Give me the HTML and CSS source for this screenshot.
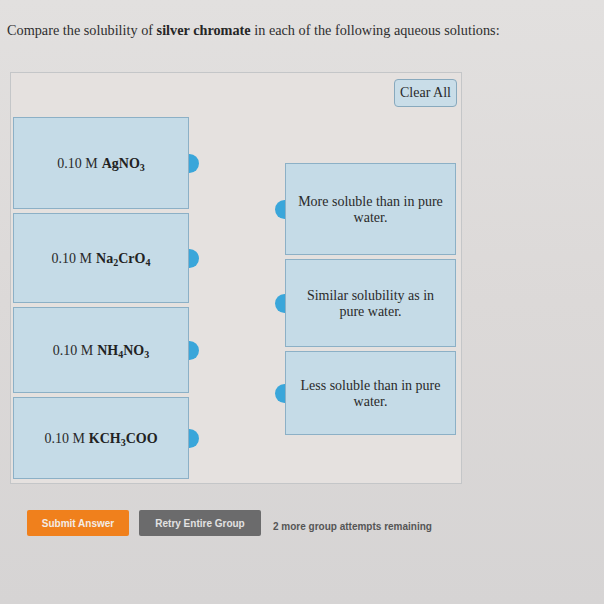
FILE: index.html
```html
<!DOCTYPE html>
<html>
<head>
<meta charset="utf-8">
<link rel="stylesheet" href="styles.css">
</head>
<body>
<p class="prompt">Compare the solubility of <b>silver chromate</b> in each of the following aqueous solutions:</p>
<div class="panel">
  <div class="toolbar"><button class="clear">Clear All</button></div>
  <div class="columns">
    <div class="col left">
      <div class="card c1">0.10 M <b>AgNO<sub>3</sub></b><span class="tab tab-r"></span></div>
      <div class="card c2">0.10 M <b>Na<sub>2</sub>CrO<sub>4</sub></b><span class="tab tab-r"></span></div>
      <div class="card c3">0.10 M <b>NH<sub>4</sub>NO<sub>3</sub></b><span class="tab tab-r"></span></div>
      <div class="card c4">0.10 M <b>KCH<sub>3</sub>COO</b><span class="tab tab-r"></span></div>
    </div>
    <div class="col right">
      <div class="card r1"><span class="tab tab-l"></span>More soluble than in pure water.</div>
      <div class="card r2"><span class="tab tab-l"></span>Similar solubility as in pure water.</div>
      <div class="card r3"><span class="tab tab-l"></span>Less soluble than in pure water.</div>
    </div>
  </div>
</div>
<div class="actions">
  <button class="btn submit">Submit Answer</button>
  <button class="btn retry">Retry Entire Group</button>
  <span class="remaining">2 more group attempts remaining</span>
</div>
</body>
</html>
```
FILE: styles.css
```css
html, body {
  margin: 0;
  padding: 0;
}
body {
  width: 604px;
  height: 604px;
  overflow: hidden;
  background: linear-gradient(180deg, #e2e0df 0%, #dcd9d8 50%, #d6d4d4 100%);
  font-family: "Liberation Serif", "Times New Roman", serif;
  color: #2a2a2a;
}
.prompt {
  margin: 0;
  padding: 22px 0 0 7px;
  height: 72px;
  box-sizing: border-box;
  font-size: 14.25px;
  color: #2e2e2e;
}
.prompt b {
  color: #262626;
}
.panel {
  margin-left: 10px;
  width: 452px;
  height: 412px;
  box-sizing: border-box;
  background: #e5e1df;
  border: 1px solid #c4c6c8;
  padding: 0 4px 0 2px;
}
.toolbar {
  display: flex;
  justify-content: flex-end;
  padding-top: 6px;
}
.clear {
  width: 63px;
  height: 28px;
  margin-right: 0;
  background: #c9dde8;
  border: 1px solid #88a9bd;
  border-radius: 4px;
  font-family: "Liberation Serif", serif;
  font-size: 14px;
  color: #2a2a2a;
  padding: 0;
}
.columns {
  display: flex;
  justify-content: space-between;
  margin-top: 10px;
  padding-right: 1px;
}
.col {
  display: flex;
  flex-direction: column;
  gap: 4px;
}
.left {
  width: 176px;
}
.right {
  width: 171px;
  margin-top: 46px;
}
.card {
  position: relative;
  height: 89px;
  box-sizing: border-box;
  background: #c5dbe7;
  border: 1px solid #8cb0c6;
  display: flex;
  align-items: center;
  justify-content: center;
  text-align: center;
  font-size: 14px;
  line-height: 16px;
  color: #2a2a2a;
}
.left .card {
  padding-top: 2px;
}
.left .c1 { height: 92px; }
.left .c2 { height: 90px; }
.left .c3 { height: 86px; }
.left .c4 { height: 82px; }
.right .card {
  padding: 1px 11px 0;
}
.right .r1 { height: 92px; }
.right .r2 { height: 88px; }
.right .r3 { height: 84px; }
.card b {
  margin-left: 4px;
  font-weight: bold;
  color: #222;
}
.card sub {
  font-size: 10px;
  vertical-align: -3px;
  line-height: 0;
}
.tab {
  position: absolute;
  top: 50%;
  width: 10px;
  height: 19px;
  margin-top: -9px;
  background: #3aa6da;
}
.tab-r {
  right: -11px;
  border-radius: 0 10px 10px 0;
}
.tab-l {
  left: -11px;
  border-radius: 10px 0 0 10px;
}
.actions {
  display: flex;
  align-items: center;
  padding: 26px 0 0 27px;
}
.btn {
  height: 26px;
  border: 0;
  border-radius: 2px;
  font-family: "Liberation Sans", Arial, sans-serif;
  font-weight: bold;
  font-size: 10px;
  color: #f3ece6;
  padding: 0;
}
.submit {
  width: 102px;
  background: #f0801c;
}
.retry {
  width: 122px;
  margin-left: 10px;
  background: #6b6b6c;
  color: #e2e2e2;
}
.remaining {
  margin-left: 12px;
  margin-top: 6px;
  font-family: "Liberation Sans", Arial, sans-serif;
  font-weight: bold;
  font-size: 10px;
  color: #555;
}
```
